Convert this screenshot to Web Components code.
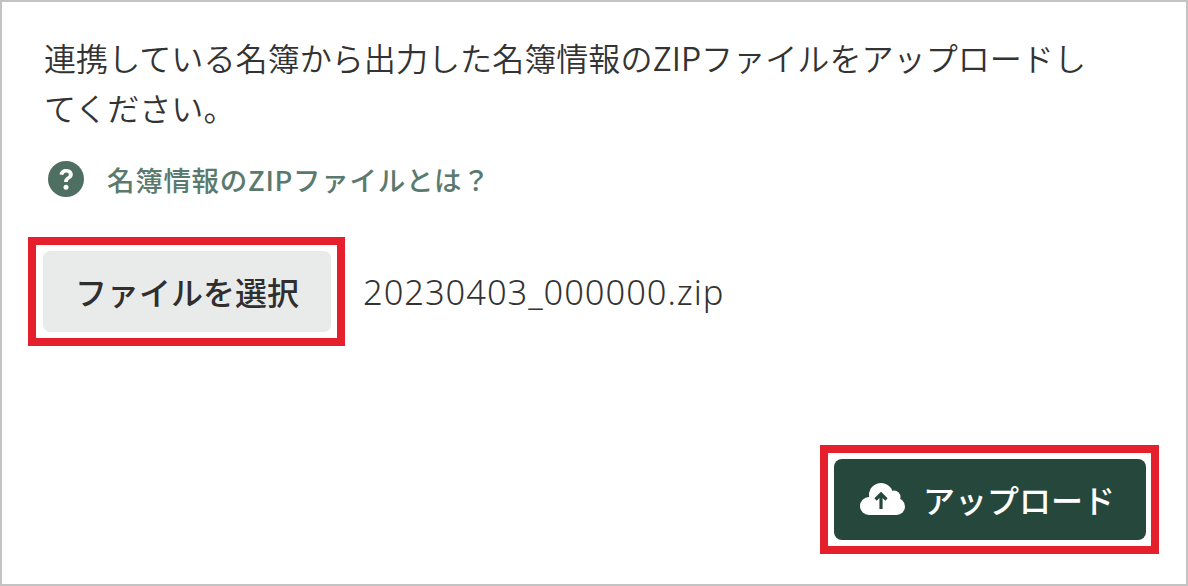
<!DOCTYPE html>
<html lang="ja">
<head>
<meta charset="utf-8">
<title>アップロード</title>
<style>
  html, body { margin: 0; padding: 0; background: #fff; }
</style>
</head>
<body>
<upload-panel>
  <help-link slot="help">名簿情報のZIPファイルとは？</help-link>
  <mark-box slot="picker" style="--pad-left: 7px; --pad-right: 6px"><app-button variant="light">ファイルを選択</app-button></mark-box>
  <mark-box slot="submit" style="--pad-left: 6px; --pad-right: 5px"><app-button variant="dark" icon="cloud">アップロード</app-button></mark-box>
</upload-panel>
<script>
const FONT = `"Noto Sans CJK JP", "Noto Sans", sans-serif`;

class UploadPanel extends HTMLElement {
  constructor() {
    super();
    this.attachShadow({ mode: "open" });
  }

  connectedCallback() {
    this.shadowRoot.innerHTML = /* html */`
    <style>
      :host {
        display: flex;
        flex-direction: column;
        box-sizing: border-box;
        width: 1188px;
        height: 586px;
        border: 2px solid #c3c3c3;
        padding: 31px 27px 0 26px;
        font-family: ${FONT};
        color: #333;
        background: #fff;
      }
      p {
        margin: 0 0 0 16px;
        width: 1060px;
        font-size: 32.1px;
        line-height: 49.5px;
        font-weight: 350;
      }
      .help { margin: 28px 0 0 20px; }
      .row {
        display: flex;
        align-items: center;
        margin-top: 35px;
      }
      .file {
        margin-left: 18px;
        font-family: "Noto Sans", sans-serif;
        font-size: 34.5px;
        font-weight: 300;
        letter-spacing: 0.95px;
        color: #333;
      }
      .foot {
        display: flex;
        justify-content: flex-end;
        margin-top: 99px;
      }
    </style>
    <p>連携している名簿から出力した名簿情報のZIPファイルをアップロードしてください。</p>
    <div class="help"><slot name="help"></slot></div>
    <div class="row">
      <slot name="picker"></slot>
      <span class="file">20230403_000000.zip</span>
    </div>
    <div class="foot"><slot name="submit"></slot></div>`;
  }
}

class HelpLink extends HTMLElement {
  constructor() {
    super();
    this.attachShadow({ mode: "open" });
  }

  connectedCallback() {
    this.shadowRoot.innerHTML = /* html */`
    <style>
      :host {
        display: inline-flex;
        align-items: center;
        gap: 23px;
        font-size: 27.5px;
        letter-spacing: 0.7px;
        line-height: 38px;
        font-weight: 500;
        color: #5a7a6e;
      }
      svg { width: 36px; height: 36px; flex: none; }
    </style>
    <svg viewBox="0 0 36 36" aria-hidden="true">
      <circle cx="18" cy="18" r="18" fill="#4f6f63"/>
      <path d="M11.600 13.600c.4-3.600 3-5.600 6.600-5.600 3.800 0 6.600 2.200 6.600 5.400 0 2.400-1.300 3.600-3 4.700-1.400.9-1.900 1.400-1.900 2.900h-3.800c0-2.800.9-3.900 2.800-5.100 1.300-.8 2-1.400 2-2.400 0-1.200-1-2-2.600-2-1.700 0-2.700.9-3 2.500z" fill="#fff"/>
      <circle cx="18" cy="26.200" r="2.500" fill="#fff"/>
    </svg>
    <slot></slot>`;
  }
}

class MarkBox extends HTMLElement {
  constructor() {
    super();
    this.attachShadow({ mode: "open" });
  }

  connectedCallback() {
    this.shadowRoot.innerHTML = /* html */`
    <style>
      :host {
        display: inline-flex;
        box-sizing: border-box;
        border: 8px solid #e61f2d;
        padding: 6px var(--pad-right, 6px) 6px var(--pad-left, 6px);
        background: #fff;
      }
    </style>
    <slot></slot>`;
  }
}

class AppButton extends HTMLElement {
  constructor() {
    super();
    this.attachShadow({ mode: "open" });
  }

  connectedCallback() {
    const dark = this.getAttribute("variant") === "dark";
    const cloud = this.getAttribute("icon") === "cloud" ? /* html */`
      <svg viewBox="0 0 45 32" aria-hidden="true">
        <g fill="#fff">
          <circle cx="9" cy="23" r="9"/>
          <circle cx="21" cy="12" r="12"/>
          <circle cx="34" cy="14" r="6.500"/>
          <circle cx="36.500" cy="23.500" r="8.500"/>
          <rect x="9" y="16" width="27" height="16"/>
        </g>
        <path d="M21 26V11M15.500 16.500 21 11l5.500 5.500" fill="none" stroke="#26483c" stroke-width="3.200"/>
      </svg>` : "";
    this.shadowRoot.innerHTML = /* html */`
    <style>
      :host {
        display: inline-flex;
        align-items: center;
        justify-content: center;
        box-sizing: border-box;
        height: 81px;
        width: ${dark ? 312 : 288}px;
        padding-right: ${dark ? 5 : 0}px;
        padding-bottom: 2px;
        border-radius: ${dark ? 8 : 7}px;
        gap: 18px;
        font-size: 32px;
        font-weight: 500;
        color: ${dark ? "#fff" : "#2f2f2f"};
        background: ${dark ? "#26483c" : "#e9ebea"};
      }
      svg { width: 45px; height: 32px; flex: none; }
    </style>
    ${cloud}<slot></slot>`;
  }
}

customElements.define("upload-panel", UploadPanel);
customElements.define("help-link", HelpLink);
customElements.define("mark-box", MarkBox);
customElements.define("app-button", AppButton);
</script>
</body>
</html>
